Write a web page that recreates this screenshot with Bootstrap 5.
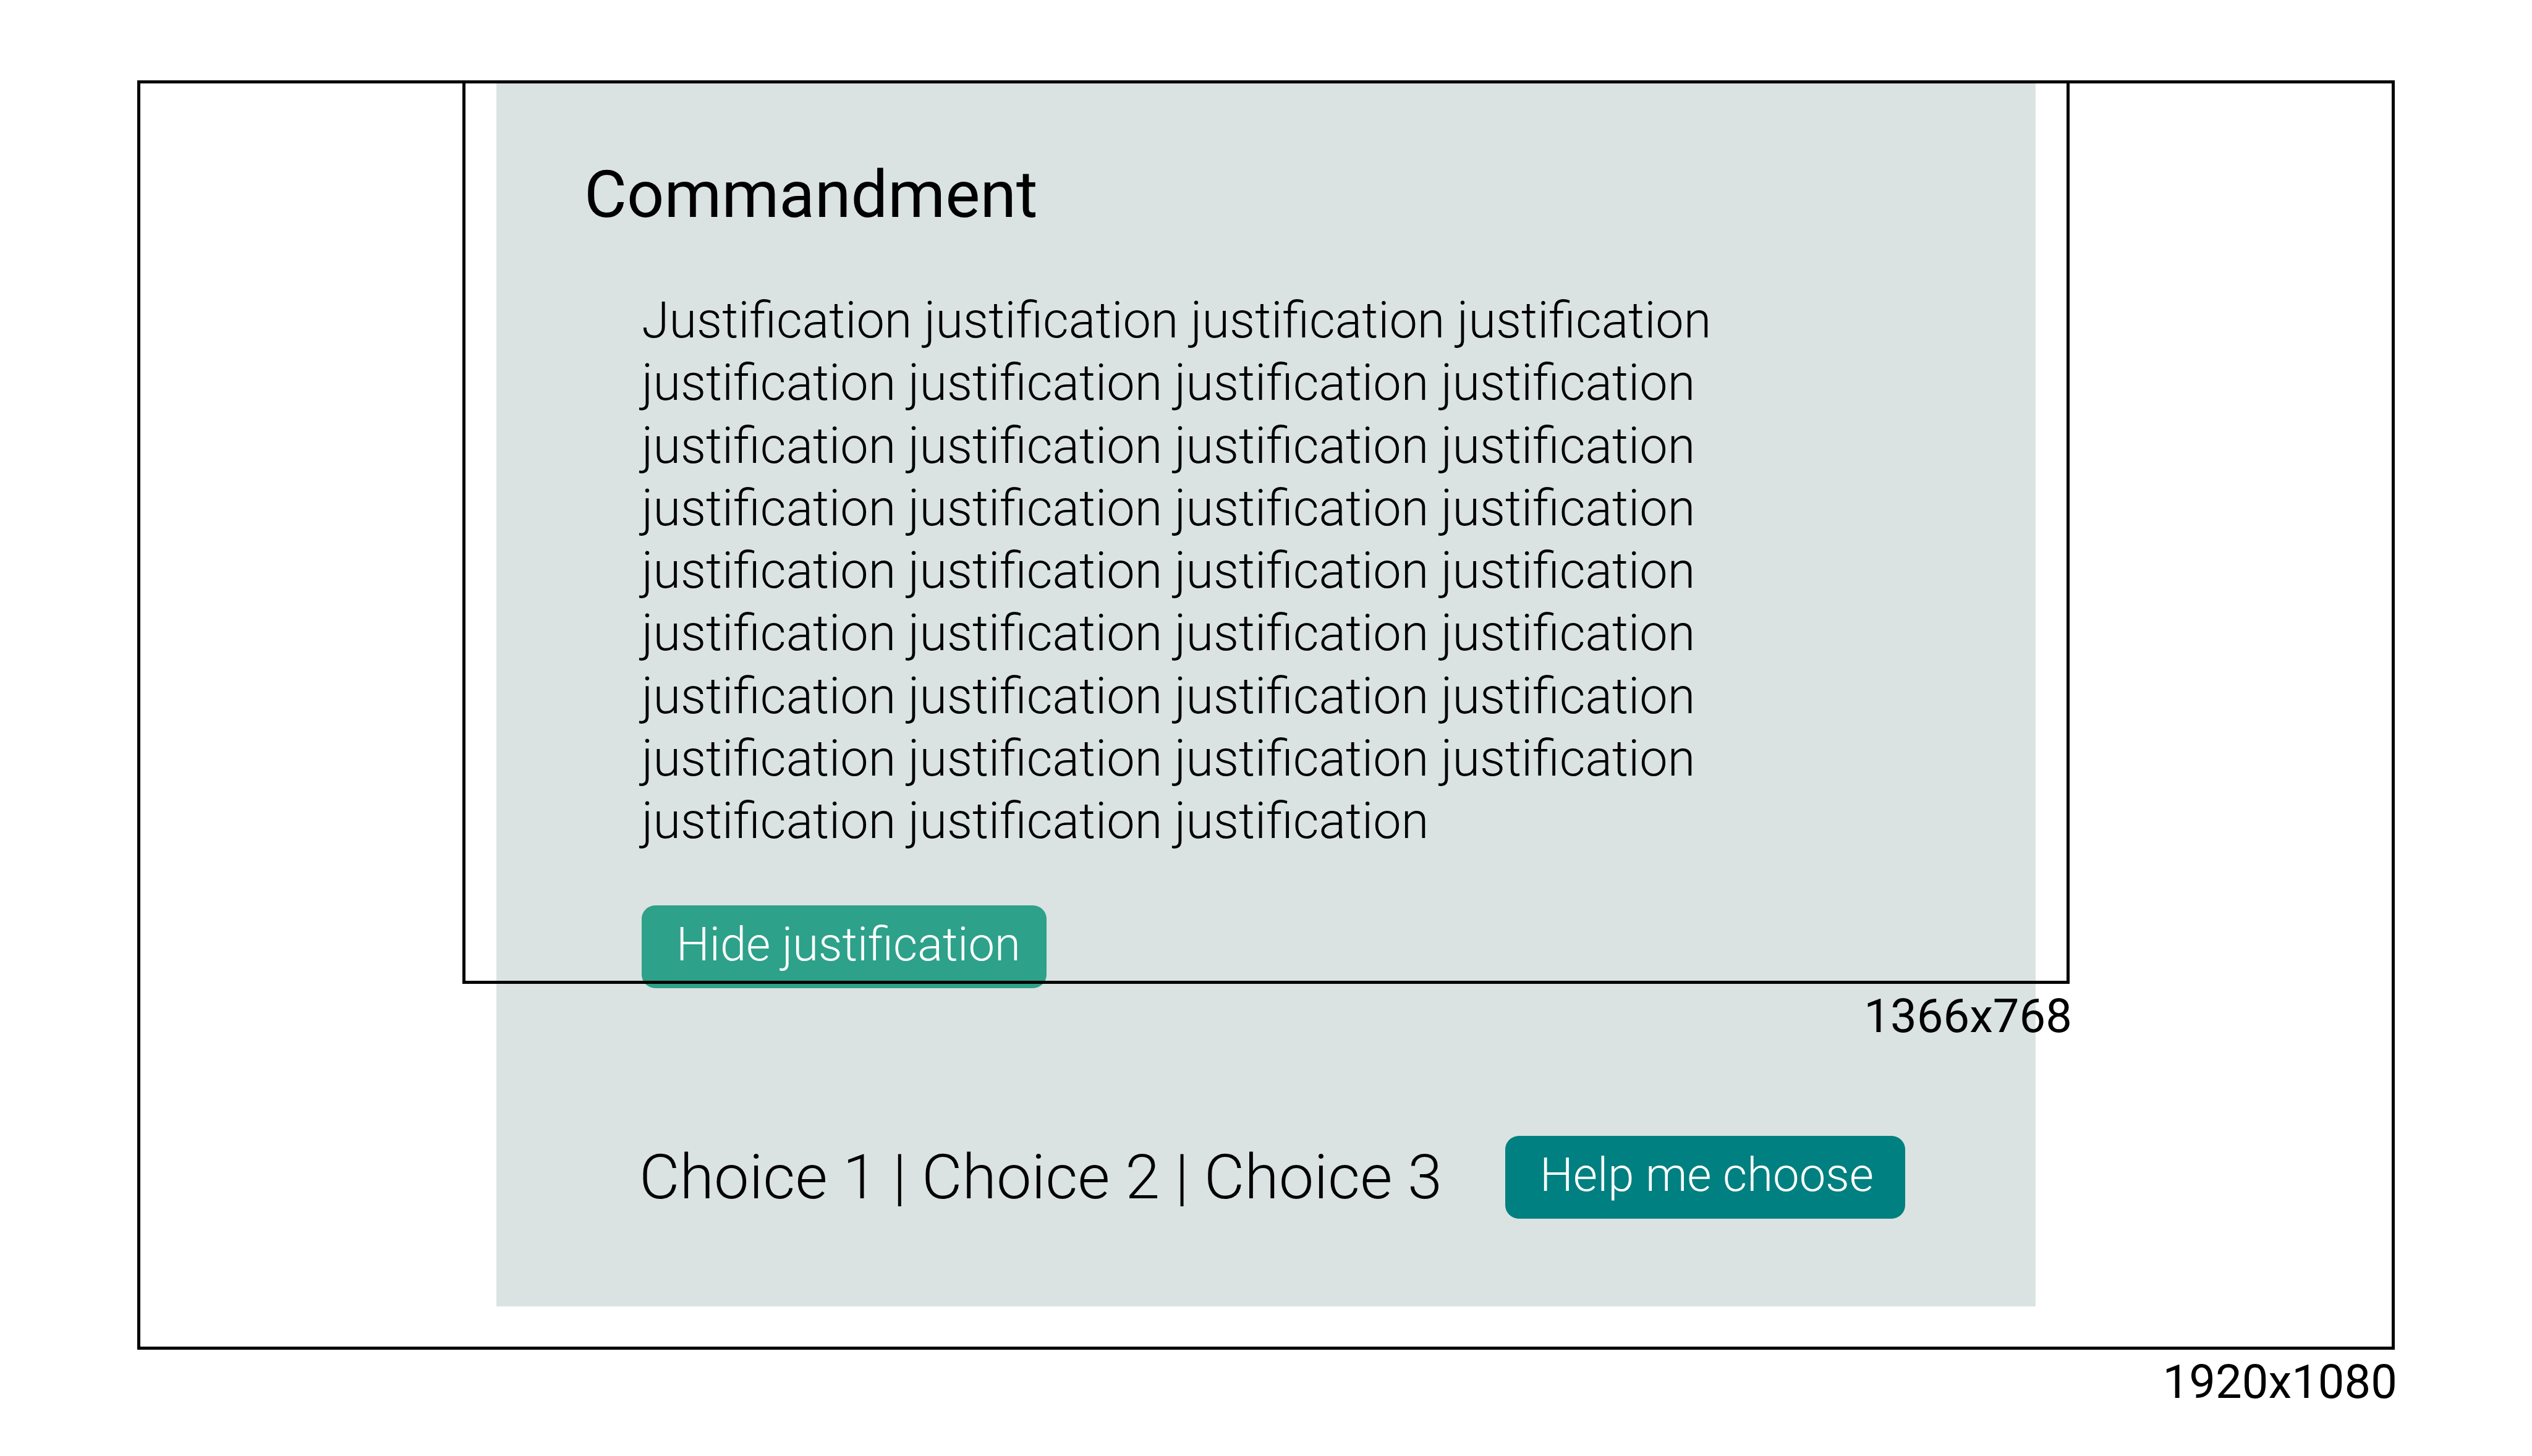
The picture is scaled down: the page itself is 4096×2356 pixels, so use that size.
<!DOCTYPE html>
<html lang="en">
<head>
<meta charset="utf-8">
<meta name="viewport" content="width=device-width, initial-scale=1">
<title>Commandment</title>
<link href="https://cdn.jsdelivr.net/npm/bootstrap@5.3.0/dist/css/bootstrap.min.css" rel="stylesheet">
<style>
  body { font-family: Roboto, "Liberation Sans", sans-serif; color: #000; background: #fff; }
  .board { padding: 130px 222px 0; }
  .screen-lg { border: 5px solid #000; padding-bottom: 65px; }
  .screen-sm { top: -5px; width: 2600px; pointer-events: none; }
  .screen-sm-edge { border: 5px solid #000; aspect-ratio: 1366 / 768; }
  .size-label { font-size: 76px; line-height: 90px; padding-top: 7px; margin-right: -4px; }
  .panel { max-width: 2490px; background: #dae3e1; padding: 116px 142px 142px; }
  .panel-title { font-size: 106px; line-height: 128px; font-weight: 400; margin-bottom: 89px; }
  .panel-body { padding-left: 93px; font-weight: 300; }
  .reason { font-size: 81px; line-height: 1.25; max-width: 1850px; margin-bottom: 86px; }
  .btn-action { --bs-btn-color: #fff; --bs-btn-hover-color: #fff; --bs-btn-active-color: #fff;
    border: 0; border-radius: 22px; font-size: 76px; line-height: 90px; font-weight: 300; padding: 18px 42px 26px 56px; }
  .btn-hide { --bs-btn-bg: #2da189; --bs-btn-hover-bg: #26907a; --bs-btn-active-bg: #26907a; }
  .btn-help { --bs-btn-bg: #008080; --bs-btn-hover-bg: #007070; --bs-btn-active-bg: #007070; padding-right: 51px; }
  .choices { margin: 239px 0 0 -4px; gap: 102px; font-size: 101px; line-height: 134px; }
</style>
</head>
<body>
<main class="board">
  <section class="screen-lg position-relative">
    <article class="panel w-100 mx-auto">
      <h1 class="panel-title">Commandment</h1>
      <div class="panel-body">
        <p class="reason">Justification justification justification justification justification justification justification justification justification justification justification justification justification justification justification justification justification justification justification justification justification justification justification justification justification justification justification justification justification justification justification justification justification justification justification</p>
        <button type="button" class="btn btn-action btn-hide d-block">Hide justification</button>
        <div class="choices d-flex align-items-center">
          <div><a href="#choice1" class="text-reset text-decoration-none">Choice 1</a> | <a href="#choice2" class="text-reset text-decoration-none">Choice 2</a> | <a href="#choice3" class="text-reset text-decoration-none">Choice 3</a></div>
          <button type="button" class="btn btn-action btn-help">Help me choose</button>
        </div>
      </div>
    </article>
    <div class="screen-sm position-absolute start-50 translate-middle-x">
      <div class="screen-sm-edge"></div>
      <div class="size-label text-end">1366x768</div>
    </div>
  </section>
  <div class="size-label text-end">1920x1080</div>
</main>
<script src="https://cdn.jsdelivr.net/npm/bootstrap@5.3.0/dist/js/bootstrap.bundle.min.js"></script>
</body>
</html>
